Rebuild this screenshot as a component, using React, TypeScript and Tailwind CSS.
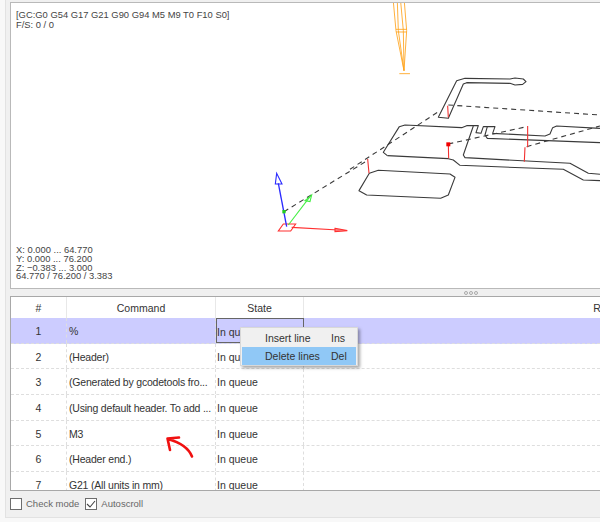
const rows = [
  ["1", "%"],
  ["2", "(Header)"],
  ["3", "(Generated by gcodetools fro..."],
  ["4", "(Using default header. To add ..."],
  ["5", "M3"],
  ["6", "(Header end.)"],
  ["7", "G21 (All units in mm)"],
];

function Viewer() {
  return (
    <svg className="absolute inset-0" width="589" height="286" viewBox="11 3 589 286" fill="none">
      {/* tool */}
      <g transform="translate(370 0) scale(0.3333)" stroke="#ffa51f" strokeWidth="2.6">
        <path d="M70 5L78 92L102 212L110 92L103 5M82 5L85 92L102 212L100 92L92 5M78 88H110M78 96H110M88 221H120" />
      </g>
      {/* toolpath */}
      <g transform="translate(350 60) scale(0.3333)" strokeWidth="3.3">
        <g stroke="#3a3a3a" strokeLinejoin="round">
          <path d="M265 172L320 62L345 55L480 57L495 54L520 57L528 65L518 73L495 75L480 70L350 68L340 72L295 175Z" />
          <path d="M112 287L100 277L148 200L165 195L335 203L350 197L385 197L378 218L393 220L400 200L435 200L428 220L585 228L600 222L608 203L620 198L750 205" />
          <path d="M112 287L295 296L310 300L330 316L640 328L700 360L750 362" />
          <path d="M370 198L340 285L345 293L660 310L715 340L750 343" />
          <path d="M412 200L405 225L412 235L750 248" />
          <path d="M58 340L85 331L300 342L315 352L295 405L272 415L50 405L27 392Z" />
        </g>
        <path d="M0 328L270 152M295 135L750 165M295 252L530 200M530 260L750 198" stroke="#3a3a3a" strokeDasharray="15 12" />
        <path d="M293 137L295 172M53 297L57 340M295 252L296 295M533 198L533 262M525 262L523 305" stroke="#f23030" />
        <rect x="289" y="247" width="12" height="12" fill="#f00000" />
      </g>
      {/* axes */}
      <g transform="translate(260 160) scale(0.3333)" strokeWidth="3.3">
        <path d="M72 155L325 0" stroke="#3a3a3a" strokeDasharray="15 12" />
        <path d="M70 192H107L92 213H55Z" stroke="#ff3030" />
        <path d="M95 202L235 210" stroke="#ff3030" />
        <path d="M225 205L262 212L225 215Z" stroke="#ff3030" fill="#ff8080" />
        <path d="M80 200L55 70" stroke="#2a2aff" strokeWidth="4" />
        <path d="M50 40L46 72H66Z" stroke="#2a2aff" />
        <path d="M85 195L150 110" stroke="#44ee44" />
        <path d="M135 122L155 105L150 125Z" stroke="#44ee44" />
        <rect x="67" y="150" width="10" height="10" fill="#22cc22" />
      </g>
    </svg>
  );
}

function Annotation() {
  return (
    <svg className="absolute left-[160px] top-[430px]" width="40" height="32" viewBox="160 430 40 32" fill="none">
      <path d="M192 456.5C189 449 182 443 168 439M167.5 438.5L179 437.5M167.5 438.5L170 450" stroke="#f01010" strokeWidth="2.6" strokeLinecap="round" />
    </svg>
  );
}

function CheckBox({ checked, label }: { checked?: boolean; label: string }) {
  return (
    <label className="flex items-center gap-[4px]">
      <span className="w-[12px] h-[12px] border border-[#6d6d6d] bg-white flex items-center justify-center">
        {checked && (
          <svg width="10" height="10" viewBox="0 0 10 10" fill="none">
            <path d="M1 5L4 8L9 2" stroke="#444" strokeWidth="1.1" />
          </svg>
        )}
      </span>
      <span>{label}</span>
    </label>
  );
}

export default function App() {
  return (
    <div className="relative w-[600px] h-[522px] overflow-hidden bg-[#f8f8f8] pl-[5px] pb-[4px] text-[#333] font-['Liberation_Sans',sans-serif] text-[10.5px]">
      <div className="h-full bg-[#f0f0f0] border-l border-b border-[#e2e2e2] pl-[4px] pt-[2px] flex flex-col">
        {/* viewer */}
        <div className="relative h-[287px] shrink-0 bg-white border-t border-l border-b border-[#b9b9b9] flex flex-col justify-between pl-[5px] pt-[7px] pb-[7px] text-[9.4px] text-[#444]">
          <Viewer />
          <div className="relative flex flex-col leading-[10px]">
            <span>[GC:G0 G54 G17 G21 G90 G94 M5 M9 T0 F10 S0]</span>
            <span>F/S: 0 / 0</span>
          </div>
          <div className="relative flex flex-col leading-[8.7px]">
            <span>X: 0.000 ... 64.770</span>
            <span>Y: 0.000 ... 76.200</span>
            <span>Z: −0.383 ... 3.000</span>
            <span>64.770 / 76.200 / 3.383</span>
          </div>
        </div>

        {/* splitter */}
        <div className="h-[7px] shrink-0 flex items-center gap-[1px] pl-[454px]">
          <span className="w-[4px] h-[4px] rounded-full border border-[#aaa]" />
          <span className="w-[4px] h-[4px] rounded-full border border-[#aaa]" />
          <span className="w-[4px] h-[4px] rounded-full border border-[#aaa]" />
        </div>

        {/* table */}
        <div className="h-[195px] shrink-0 bg-white border-t border-l border-b border-[#a8a8a8] overflow-hidden">
          <div className="flex h-[21px] text-center">
            <div className="w-[56px] shrink-0 border-r border-[#e8e8e8] leading-[22px]">#</div>
            <div className="w-[149px] shrink-0 border-r border-[#e8e8e8] leading-[22px]">Command</div>
            <div className="w-[88px] shrink-0 border-r border-[#e8e8e8] leading-[22px]">State</div>
            <div className="w-[626px] shrink-0 leading-[22px]">Response</div>
          </div>
          {rows.map((row, i) => (
            <div key={row[0]} className={`flex h-[25.67px] leading-[27px] border-b border-dashed border-[#dedede] ${i === 0 ? "bg-[#ccccff]" : ""}`}>
              <div className="w-[56px] shrink-0 text-center border-r border-dashed border-[#dedede]">{row[0]}</div>
              <div className="w-[149px] shrink-0 pl-[2px] tracking-[-0.2px] whitespace-nowrap overflow-hidden border-r border-dashed border-[#dedede]">{row[1]}</div>
              <div className={`w-[88px] shrink-0 whitespace-nowrap ${i === 0 ? "border border-[#666]" : "pl-[1px] border-r border-dashed border-[#dedede]"}`}>In queue</div>
              <div className="w-[626px] shrink-0" />
            </div>
          ))}
        </div>

        {/* footer */}
        <div className="flex items-center gap-[6px] h-[28px] text-[9.5px] text-[#666]">
          <CheckBox label="Check mode" />
          <CheckBox checked label="Autoscroll" />
        </div>
      </div>

      {/* context menu */}
      <div className="absolute left-[240px] top-[327px] w-[118px] h-[39px] bg-[#f0f0f0] border border-[#d8d8d8] p-[1px] shadow-[2px_2px_3px_rgba(0,0,0,0.35)]">
        <div className="flex h-[18px] items-center pt-[1px] pl-[23px]">
          <span className="w-[66px]">Insert line</span>
          <span>Ins</span>
        </div>
        <div className="flex h-[18px] items-center pt-[1px] pl-[23px] bg-[#90c8f6]">
          <span className="w-[66px]">Delete lines</span>
          <span>Del</span>
        </div>
      </div>

      <Annotation />
    </div>
  );
}
